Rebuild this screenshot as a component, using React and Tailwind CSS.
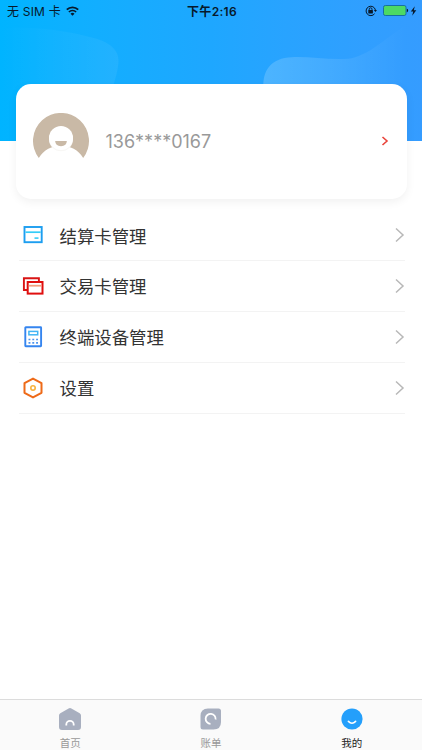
import React from "react";

function StatusBar() {
    return (
        <div className="relative z-10 grid h-[21px] grid-cols-3 items-center pr-[5px] pl-[7px] text-[12px] leading-none text-[#07192b]">
            <div className="flex items-center gap-[5px]">
                <span className="pt-[2px] tracking-[0.2px] whitespace-nowrap">无 SIM 卡</span>
                <svg width="13" height="10" viewBox="0 0 13 10" fill="none" stroke="currentColor">
                    <path d="M0.8 3.7a8.1 8.1 0 0 1 11.4 0" strokeWidth="1.9" />
                    <path d="M2.9 6a5.1 5.1 0 0 1 7.2 0" strokeWidth="1.7" />
                    <path d="M4.5 7.7a2.9 2.9 0 0 1 4 0L6.5 9.8z" fill="currentColor" stroke="none" />
                </svg>
            </div>
            <span className="pt-[2px] text-center font-semibold tracking-[0.3px] whitespace-nowrap">下午2:16</span>
            <div className="flex items-center justify-end">
                <svg width="12" height="12" viewBox="0 0 12 12" fill="none" stroke="currentColor">
                    <path d="M9.6 8.7A4.7 4.7 0 1 1 10.4 5" strokeWidth="1" />
                    <path d="M8.8 5h3.2l-1.6 2z" fill="currentColor" stroke="none" />
                    <path d="M4.2 5.5V4.2a1.4 1.4 0 0 1 2.8 0v1.3" strokeWidth="0.9" />
                    <rect x="3.3" y="5" width="4.6" height="3.500" rx="0.4" fill="currentColor" stroke="none" />
                </svg>
                <svg className="ml-[6px]" width="26" height="11" viewBox="0 0 26 11">
                    <rect x="0.5" y="0.5" width="22.5" height="10" rx="1.8" fill="#4cd964" stroke="#17709f" />
                    <path d="M23.8 3.8c1.8 0 1.8 3.4 0 3.4z" fill="#07192b" />
                </svg>
                <svg className="ml-px" width="7" height="10" viewBox="0 0 7 10">
                    <path d="M4.8 0.3L0.8 5.6h2.4L2.2 9.7 6.3 4.3H3.8z" fill="currentColor" />
                </svg>
            </div>
        </div>
    );
}

function HeaderWaves() {
    return (
        <svg className="absolute inset-0" width="422" height="141" viewBox="0 0 422 141">
            <defs>
                <linearGradient id="waveLeft" x1="0" x2="1">
                    <stop offset="0" stopColor="#fff" stopOpacity="0" />
                    <stop offset="1" stopColor="#fff" stopOpacity="0.06" />
                </linearGradient>
                <linearGradient id="waveRight" x1="0" x2="1">
                    <stop offset="0" stopColor="#fff" stopOpacity="0.18" />
                    <stop offset="0.45" stopColor="#fff" stopOpacity="0.1" />
                    <stop offset="0.9" stopColor="#fff" stopOpacity="0" />
                </linearGradient>
            </defs>
            <path d="M0 28C30 26 65 30 94 38C112 43 121 52 118 66C117 74 115 79 112 90H0z" fill="url(#waveLeft)" />
            <path
                d="M263.500 90C262 70 271 58 292 57.200C310 56.500 328 60 348 58.800C368 56 382 41 403 27L422 18V141H263.500z"
                fill="url(#waveRight)"
            />
        </svg>
    );
}

function Avatar() {
    return (
        <svg width="56" height="56" viewBox="0 0 56 56">
            <path d="M5.800 45A28 28 0 1 1 50.200 45A26 26 0 0 0 5.800 45z" fill="#c9b9a6" />
            <circle cx="28" cy="26.200" r="12" fill="#f8f7f5" />
            <circle cx="28" cy="25" r="12" fill="#fff" />
            <path d="M22.200 28h11.600c0 3-2.200 5.200-5.800 5.200S22.200 31 22.200 28z" fill="#c9b9a6" />
        </svg>
    );
}

function SettleCardIcon() {
    return (
        <svg width="20" height="20" viewBox="0 0 20 20" fill="none">
            <rect x="1.500" y="2" width="17.200" height="15.200" stroke="#1d9ef0" strokeWidth="1.900" />
            <path d="M2.500 7.200h15.200" stroke="#35ccf8" strokeWidth="1.700" />
            <path d="M11.500 13.100h4" stroke="#35ccf8" strokeWidth="1.600" />
        </svg>
    );
}

function TradeCardIcon() {
    return (
        <svg width="22" height="20" viewBox="0 0 22 20" fill="none" className="shrink-0">
            <path d="M5.500 14H1.900V2.200h15V5.500" stroke="#d91414" strokeWidth="1.900" />
            <rect x="5.700" y="6" width="14.800" height="11.600" stroke="#e00f0f" strokeWidth="2" />
            <path d="M6.800 9.700h12.600" stroke="#f3a080" strokeWidth="1.800" />
        </svg>
    );
}

function TerminalIcon() {
    return (
        <svg width="20" height="22" viewBox="0 0 20 22" fill="none">
            <rect x="2.300" y="1.300" width="15.800" height="19" rx="0.500" stroke="#3585ef" strokeWidth="1.900" />
            <rect x="5.900" y="5.400" width="8.800" height="3.400" stroke="#42b5f5" strokeWidth="1.500" />
            <path d="M5.500 13.500h9.500M5.500 16.800h9.500" stroke="#4c94ef" strokeWidth="1.700" strokeDasharray="1.900" />
        </svg>
    );
}

function SettingIcon() {
    return (
        <svg width="20" height="22" viewBox="0 0 20 22" fill="none">
            <path
                d="M10 1.600L18.500 6.200V15.800L10 20.400L1.500 15.800V6.200z"
                stroke="#ee6a18"
                strokeWidth="2"
                strokeLinejoin="round"
            />
            <circle cx="10" cy="11" r="2.200" stroke="#f8b23d" strokeWidth="1.600" />
        </svg>
    );
}

const menus = [
    { name: "结算卡管理", icon: <SettleCardIcon /> },
    { name: "交易卡管理", icon: <TradeCardIcon /> },
    { name: "终端设备管理", icon: <TerminalIcon /> },
    { name: "设置", icon: <SettingIcon /> },
];

const tabs = [
    {
        name: "首页",
        icon: (
            <svg width="22" height="22" viewBox="0 0 22 22" fill="none">
                <path
                    d="M9.600 0.500q1.400-.8 2.800 0L20.700 5.200q1.300.8 1.300 2.300V19q0 3-3 3H3q-3 0-3-3V7.500Q0 6 1.300 5.200z"
                    fill="#a8afbf"
                />
                <path d="M7.300 17.600V16.500a3.700 3.700 0 0 1 7.400 0v1.100" stroke="#fff" strokeWidth="1.800" />
            </svg>
        ),
    },
    {
        name: "账单",
        icon: (
            <svg width="22" height="22" viewBox="0 0 22 22" fill="none">
                <path d="M8 0.500H18.500q2.500 0 2.500 2.500V14q0 7.500-7.500 7.500H3Q0.500 21.500 0.500 19V8q0-7.500 7.500-7.500z" fill="#a8afbf" />
                <path d="M10.500 15.800A5 5 0 1 1 15.600 11.500" stroke="#fff" strokeWidth="1.800" />
            </svg>
        ),
    },
    {
        name: "我的",
        active: true,
        icon: (
            <svg width="22" height="22" viewBox="0 0 22 22" fill="none">
                <circle cx="11" cy="11" r="10.600" fill="#249ffb" />
                <path d="M7.400 13.400q3.600 3.600 7.200 0" stroke="#fff" strokeWidth="1.600" strokeLinecap="round" />
            </svg>
        ),
    },
];

export default function App() {
    return (
        <div className="flex h-[750px] w-[422px] flex-col overflow-hidden bg-white font-['Inter','Noto_Sans_CJK_SC',sans-serif]">
            {/* Header */}
            <header className="relative h-[141px] shrink-0 bg-linear-to-r from-[#00b4ff] via-[#1ea7ff] to-[#359cff]">
                <HeaderWaves />
                <StatusBar />
            </header>

            {/* User card */}
            <section className="z-10 mx-[15.500px] mt-[-57.5px] flex h-[115px] shrink-0 items-center rounded-[15px] bg-white pr-[18px] pl-[17.500px] shadow-[0_3px_10px_rgba(0,0,0,0.06)]">
                <Avatar />
                <span className="ml-[16.500px] text-[18px] text-[#999]">136****0167</span>
                <svg className="ml-auto" width="8" height="10" viewBox="0 0 8 10" fill="none">
                    <path d="M1.500 1L6 5 1.500 9" stroke="#e9443b" strokeWidth="1.600" />
                </svg>
            </section>

            {/* Menu */}
            <ul className="mr-[17px] ml-[19px] mt-[12px] flex-1">
                {menus.map((item) => (
                    <li key={item.name} className="flex h-[50.800px] items-center border-b border-[#f3f3f3] pl-[4px]">
                        <span className="flex w-5 justify-center">{item.icon}</span>
                        <span className="ml-[16.500px] pt-[2px] text-[17.400px] leading-none text-[#333]">{item.name}</span>
                        <svg className="ml-auto" width="10" height="16" viewBox="0 0 10 16" fill="none">
                            <path d="M1 1.500L8 8 1 14.500" stroke="#b8b8b8" strokeWidth="1.500" />
                        </svg>
                    </li>
                ))}
            </ul>

            {/* Tab bar */}
            <nav className="grid h-[51px] shrink-0 grid-cols-3 border-t border-[#dcdcdc] bg-[#fafafa]">
                {tabs.map((tab) => (
                    <div key={tab.name} className="flex flex-col items-center pt-[8px]">
                        {tab.icon}
                        <span
                            className={
                                tab.active
                                    ? "mt-[9px] text-[10.500px] leading-none text-[#222]"
                                    : "mt-[9px] text-[10.500px] leading-none text-[#999]"
                            }
                        >
                            {tab.name}
                        </span>
                    </div>
                ))}
            </nav>
        </div>
    );
}
